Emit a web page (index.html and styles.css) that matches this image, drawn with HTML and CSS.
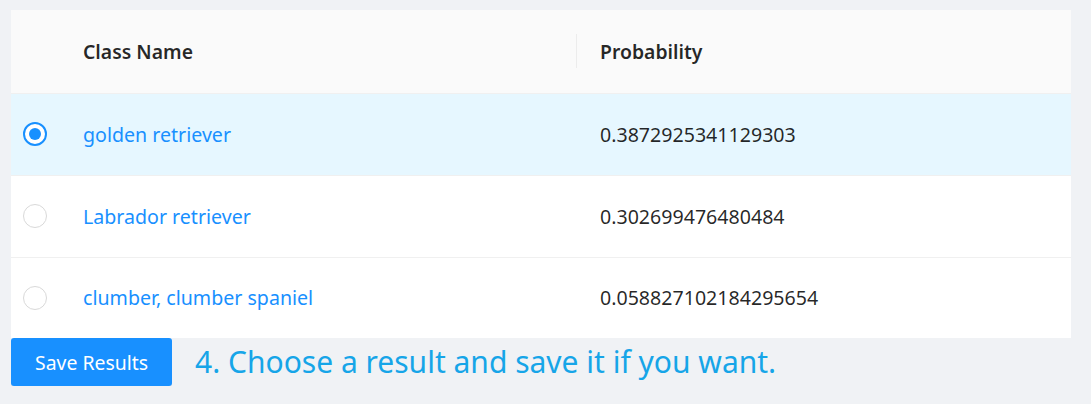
FILE: index.html
```html
<!DOCTYPE html>
<html>
<head>
<meta charset="utf-8">
<link rel="stylesheet" href="styles.css">
</head>
<body>
<div class="page">
  <table class="table">
    <thead>
      <tr>
        <th class="sel"></th>
        <th class="name">Class Name</th>
        <th class="prob"><span class="divider"></span>Probability</th>
      </tr>
    </thead>
    <tbody>
      <tr class="selected">
        <td class="sel"><span class="radio checked"></span></td>
        <td class="name"><a>golden retriever</a></td>
        <td class="prob">0.3872925341129303</td>
      </tr>
      <tr>
        <td class="sel"><span class="radio"></span></td>
        <td class="name"><a>Labrador retriever</a></td>
        <td class="prob">0.302699476480484</td>
      </tr>
      <tr class="last">
        <td class="sel"><span class="radio"></span></td>
        <td class="name"><a>clumber, clumber spaniel</a></td>
        <td class="prob">0.058827102184295654</td>
      </tr>
    </tbody>
  </table>
  <div class="actions">
    <button class="btn">Save Results</button>
    <span class="hint">4. Choose a result and save it if you want.</span>
  </div>
</div>
</body>
</html>
```
FILE: styles.css
```css
html, body {
  margin: 0;
  padding: 0;
  background: #f0f2f5;
}
body {
  font-family: "Noto Sans", "Open Sans", sans-serif;
  color: rgba(0,0,0,0.85);
}
.page {
  padding: 10px 20px 0 11px;
}
.table {
  width: 100%;
  border-collapse: collapse;
  background: #fff;
  font-size: 19.6px;
}
.table th, .table td {
  height: 82px;
  padding: 0 24px;
  text-align: left;
  box-sizing: border-box;
  border-bottom: 1px solid #f0f0f0;
}
.table tr.last td { border-bottom: none; height: 81px; }
.table th {
  background: #fafafa;
  font-weight: 600;
  font-size: 19.4px;
  height: 83px;
}
.table .sel {
  width: 48px;
  padding: 0 12px;
}
.table .name { width: 517px; }
.table th.prob { position: relative; }
.divider {
  position: absolute;
  left: 0;
  top: 24px;
  width: 1px;
  height: 34px;
  background: #ececec;
}
.table tr.selected td {
  background: #e6f7ff;
}
.table a {
  color: #1890ff;
}
.radio {
  display: block;
  width: 24px;
  height: 24px;
  box-sizing: border-box;
  border: 1px solid #d9d9d9;
  border-radius: 50%;
  background: #fff;
  position: relative;
}
.radio.checked {
  border: 2px solid #1890ff;
}
.radio.checked::after {
  content: "";
  position: absolute;
  left: 4px;
  top: 4px;
  width: 12px;
  height: 12px;
  border-radius: 50%;
  background: #1890ff;
}
.actions {
  display: flex;
  align-items: center;
  gap: 23px;
}
.btn {
  height: 48px;
  width: 161px;
  padding: 0;
  border: none;
  border-radius: 3px;
  background: #1890ff;
  color: #fff;
  font-family: inherit;
  font-size: 19.4px;
  box-shadow: 0 2px 0 rgba(0,0,0,0.045);
}
.hint {
  color: #16a5e8;
  font-size: 30px;
  position: relative;
  top: -1px;
}
```
